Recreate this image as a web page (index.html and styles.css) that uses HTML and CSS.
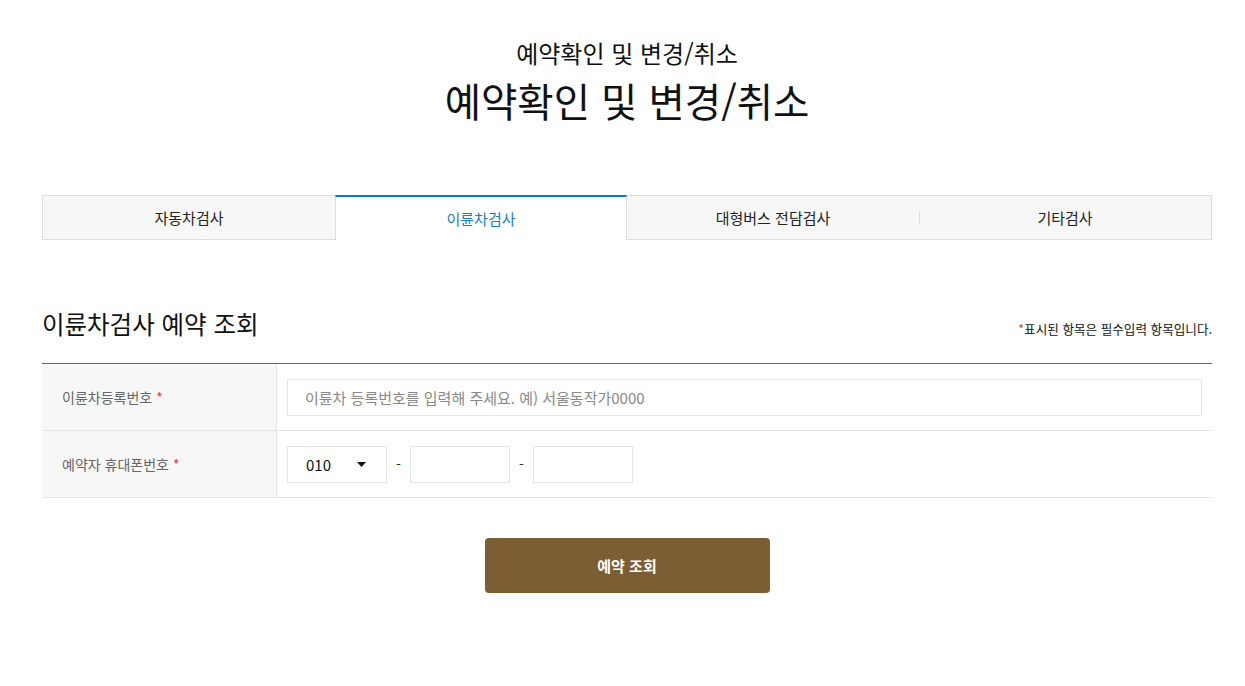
FILE: index.html
```html
<!DOCTYPE html>
<html lang="ko">
<head>
    <meta charset="UTF-8">
    <meta name="viewport" content="width=device-width, initial-scale=1.0">
    <title>예약확인 및 변경/취소</title>
    <link rel="stylesheet" href="styles.css">
</head>
<body>
    <div class="wrap">
        <div class="page-title">
            <p class="sub-title">예약확인 및 변경/취소</p>
            <h1>예약확인 및 변경/취소</h1>
        </div>

        <!-- 검사 종류 탭 -->
        <ul class="tabs">
            <li class="tab">자동차검사</li>
            <li class="tab active">이륜차검사</li>
            <li class="tab">대형버스 전담검사</li>
            <li class="tab sep">기타검사</li>
        </ul>

        <div class="section-head">
            <h2>이륜차검사 예약 조회</h2>
            <p class="req-note"><span class="star">*</span>표시된 항목은 필수입력 항목입니다.</p>
        </div>

        <form class="form-table">
            <div class="row">
                <label class="th" for="bikeNo">이륜차등록번호 <span class="star">*</span></label>
                <div class="td">
                    <input type="text" id="bikeNo" class="input full" placeholder="이륜차 등록번호를 입력해 주세요. 예) 서울동작가0000">
                </div>
            </div>
            <div class="row">
                <label class="th" for="phone1">예약자 휴대폰번호 <span class="star">*</span></label>
                <div class="td phone">
                    <div class="select" id="phone1">
                        <span>010</span>
                        <svg width="9" height="5" viewBox="0 0 9 5"><path d="M0 0h9L4.5 5z" fill="#111"/></svg>
                    </div>
                    <span class="dash">-</span>
                    <input type="text" class="input short">
                    <span class="dash">-</span>
                    <input type="text" class="input short">
                </div>
            </div>
        </form>

        <div class="btn-area">
            <button type="button" class="btn">예약 조회</button>
        </div>
    </div>
</body>
</html>
```

FILE: styles.css
```css
/* 예약확인 페이지 */
body {
    font-family: "Noto Sans CJK KR", "Noto Sans", sans-serif;
    color: #111;
    background: #fff;
    margin: 0;
    padding: 0;
}
.wrap {
    width: 1170px;
    margin-left: 42px;
}
.page-title {
    text-align: center;
    padding-top: 36px;
}
.sub-title {
    margin: 0;
    font-size: 24px;
    line-height: 34px;
    color: #111;
}
.page-title h1 {
    margin: 0;
    font-size: 39.5px;
    font-weight: 400;
    line-height: 60px;
    color: #111;
}
.tabs {
    list-style: none;
    margin: 65px 0 0;
    padding: 0;
    display: grid;
    grid-template-columns: repeat(4, 1fr);
    border: 1px solid #ddd;
    background: #f7f7f7;
}
.tab {
    position: relative;
    height: 43px;
    display: flex;
    align-items: center;
    justify-content: center;
    font-size: 15px;
    color: #222;
}
.tab.active {
    background: #fff;
    color: #1a7fc1;
    margin: -1px 0 -1px;
    height: 43px;
    border-top: 2px solid #0a79c6;
    border-left: 1px solid #ddd;
    border-right: 1px solid #ddd;
}
.tab.sep::before {
    content: "";
    position: absolute;
    left: 0;
    top: 16px;
    height: 12px;
    border-left: 1px solid #ddd;
}
.section-head {
    display: flex;
    justify-content: space-between;
    align-items: flex-end;
    margin-top: 66px;
    padding-bottom: 21px;
    border-bottom: 1px solid #666;
}
.section-head h2 {
    margin: 0;
    font-size: 24.5px;
    font-weight: 400;
    line-height: 36px;
    color: #111;
}
.req-note {
    margin: 0 0 4px;
    font-size: 12.6px;
    color: #111;
}
.star {
    color: #e0393e;
}
.form-table {
    margin: 0;
}
.row {
    display: flex;
    border-bottom: 1px solid #e5e5e5;
}
.th {
    width: 214px;
    flex: none;
    padding-left: 20px;
    display: flex;
    align-items: center;
    gap: 4px;
    background: #f7f7f7;
    border-right: 1px solid #e5e5e5;
    font-size: 14px;
    color: #666;
}
.td {
    flex: 1;
    padding: 15px 10px 14px;
    display: flex;
    align-items: center;
}
.input {
    box-sizing: border-box;
    height: 37px;
    border: 1px solid #e5e5e5;
    padding: 0 17px;
    font-family: inherit;
    font-size: 15px;
    color: #111;
    outline: none;
}
.input::placeholder {
    color: #888;
}
.full {
    width: 100%;
}
.short {
    width: 100px;
}
.select {
    box-sizing: border-box;
    width: 100px;
    height: 37px;
    border: 1px solid #e5e5e5;
    padding: 0 20px 0 18px;
    display: flex;
    align-items: center;
    justify-content: space-between;
    font-size: 15px;
}
.dash {
    width: 23px;
    text-align: center;
    font-size: 14px;
    color: #333;
    padding-bottom: 2px;
}
.btn-area {
    display: flex;
    justify-content: center;
    margin-top: 40px;
}
.btn {
    width: 285px;
    height: 55px;
    border: none;
    border-radius: 4px;
    background: #7d5d33;
    color: #fff;
    font-family: inherit;
    font-size: 15px;
    font-weight: 700;
}
```
